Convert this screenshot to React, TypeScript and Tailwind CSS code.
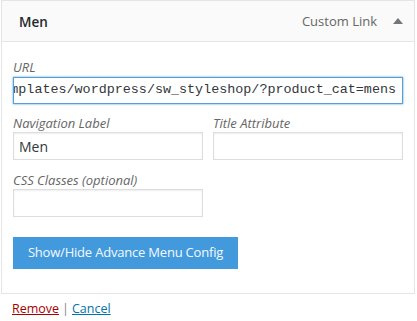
import React from 'react';

const font = { fontFamily: '"Open Sans", "Noto Sans", sans-serif' };

export default function App() {
  return (
    <div className="w-[417px] h-[321px] bg-white text-[#444] text-[13px]" style={font}>
      <div className="ml-px w-[414px] h-[294px] border border-[#e5e5e5] flex flex-col">
        {/* header */}
        <div className="h-[41px] bg-[#fafafa] border-b border-[#e5e5e5] flex items-center pl-[17px] pr-[11px] pt-[2px]">
          <span className="font-semibold text-[#23282d] text-[13.5px]">Men</span>
          <span className="ml-auto text-[#666] text-[13px]">Custom Link</span>
          <svg width="10" height="6" viewBox="0 0 10 6" className="ml-[16px] mb-[3px]">
            <polygon points="5,0 10,6 0,6" fill="#72777c" />
          </svg>
        </div>

        {/* body */}
        <div className="flex flex-col pl-[11px] pt-[16px]">
          <label className="italic text-[#666] text-[13px] leading-[18px]">URL</label>
          <div className="mt-[1px] w-[390px] h-[27px] border border-[#5b9dd9] shadow-[0_0_2px_rgba(30,140,190,0.8)] flex justify-end items-center overflow-hidden px-[6px]">
            <span className="whitespace-nowrap text-[13.4px] text-[#32373c]" style={{ fontFamily: '"Liberation Mono", monospace' }}>
              http://demo.com/templates/wordpress/sw_styleshop/?product_cat=mens
            </span>
          </div>

          <div className="flex gap-[10px] mt-[10px]">
            <div className="flex flex-col">
              <label className="italic text-[#666] text-[13px] leading-[18px]">Navigation Label</label>
              <div className="w-[190px] h-[28px] border border-[#ddd] shadow-[inset_0_1px_2px_rgba(0,0,0,0.07)] flex items-center px-[5px] text-[14px] text-[#32373c]">Men</div>
            </div>
            <div className="flex flex-col">
              <label className="italic text-[#666] text-[13px] leading-[18px]">Title Attribute</label>
              <div className="w-[190px] h-[28px] border border-[#ddd] shadow-[inset_0_1px_2px_rgba(0,0,0,0.07)]"></div>
            </div>
          </div>

          <label className="mt-[11px] italic text-[#666] text-[13px] leading-[18px]">CSS Classes (optional)</label>
          <div className="w-[190px] h-[28px] border border-[#ddd] shadow-[inset_0_1px_2px_rgba(0,0,0,0.07)]"></div>

          <button className="mt-[20px] w-[225px] h-[32px] bg-[#4299dc] text-[#f4f9fd] text-[13px] tracking-[-0.2px] flex items-center justify-center">
            Show/Hide Advance Menu Config
          </button>
        </div>
      </div>

      <div className="pl-[12px] pt-[6px] text-[12.5px]">
        <a href="#" className="text-[#a00] underline">Remove</a>
        <span className="text-[#82878c] mx-[3px]">|</span>
        <a href="#" className="text-[#0073aa] underline">Cancel</a>
      </div>
    </div>
  );
}
